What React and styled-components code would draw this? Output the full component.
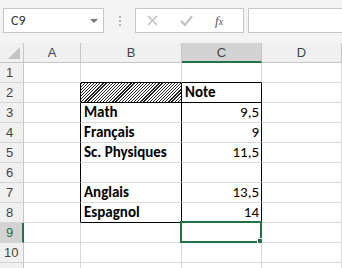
import React from "react";
import styled, { createGlobalStyle } from "styled-components";

const GlobalStyle = createGlobalStyle`
  html, body {
    margin: 0;
    padding: 0;
    background: #f3f3f3;
    overflow: hidden;
  }
`;

const Window = styled.div`
  width: 342px;
  height: 268px;
  display: flex;
  flex-direction: column;
  background: #f3f3f3;
  font-family: Carlito, Calibri, Lato, "Liberation Sans", sans-serif;
  overflow: hidden;
`;

const FormulaBar = styled.div`
  height: 43px;
  flex: none;
  display: flex;
  align-items: flex-start;
  box-sizing: border-box;
  padding: 8px 0 0 3px;
`;

const NameBox = styled.div`
  width: 101px;
  height: 25px;
  box-sizing: border-box;
  border: 1px solid #c6c6c6;
  background: #fff;
  display: flex;
  align-items: center;
  justify-content: space-between;
  padding: 0 4px 0 7px;
  font-size: 14px;
  color: #333;
`;

const Caret = styled.span`
  width: 0;
  height: 0;
  border-left: 4px solid transparent;
  border-right: 4px solid transparent;
  border-top: 4px solid #777;
  margin-right: 1px;
`;

const Grip = styled.div`
  width: 31px;
  height: 25px;
  display: flex;
  flex-direction: column;
  align-items: center;
  justify-content: center;
  gap: 2px;

  span {
    width: 2px;
    height: 2px;
    background: #b5b5b5;
  }
`;

const FxButtons = styled.div`
  width: 109px;
  height: 25px;
  box-sizing: border-box;
  border: 1px solid #c6c6c6;
  background: #fff;
  display: flex;
  align-items: center;
  padding-left: 10px;
  gap: 20px;
`;

const FxLabel = styled.span`
  font-family: "Liberation Serif", serif;
  font-style: italic;
  font-size: 13px;
  color: #555;
  margin-left: 1px;

  sub {
    font-size: 10px;
    vertical-align: baseline;
  }
`;

const FormulaInput = styled.div`
  flex: 1;
  height: 25px;
  margin-left: 4px;
  box-sizing: border-box;
  border: 1px solid #c6c6c6;
  border-right: none;
  background: #fff;
`;

const Sheet = styled.div`
  display: grid;
  grid-template-columns: 24px 57px 101px 80px 80px 1fr;
  grid-auto-rows: 20px;
  background: #fff;
`;

const Corner = styled.div`
  box-sizing: border-box;
  background: #f0f0f0;
  border-right: 1px solid #c6c6c6;
  border-bottom: 1px solid #c6c6c6;
  position: relative;

  &::after {
    content: "";
    position: absolute;
    right: 3px;
    bottom: 3px;
    width: 0;
    height: 0;
    border-left: 12px solid transparent;
    border-bottom: 12px solid #c4c4c4;
  }
`;

const ColHead = styled.div`
  box-sizing: border-box;
  background: ${({ $active }) => ($active ? "#d3d3d3" : "#f0f0f0")};
  border-right: 1px solid #c6c6c6;
  border-bottom: ${({ $active }) =>
    $active ? "2px solid #217346" : "1px solid #c6c6c6"};
  display: flex;
  align-items: center;
  justify-content: center;
  font-family: "Liberation Sans", sans-serif;
  font-size: 13px;
  color: #444;
  padding-top: ${({ $active }) => ($active ? "1px" : "0")};
`;

const RowHead = styled.div`
  box-sizing: border-box;
  background: ${({ $active }) => ($active ? "#d3d3d3" : "#f0f0f0")};
  border-right: ${({ $active }) =>
    $active ? "2px solid #217346" : "1px solid #c6c6c6"};
  border-bottom: 1px solid #d4d4d4;
  display: flex;
  align-items: center;
  padding-left: ${({ $wide }) => ($wide ? "4px" : "6px")};
  font-family: "Liberation Sans", sans-serif;
  font-size: 13px;
  color: ${({ $active }) => ($active ? "#217346" : "#444")};
`;

const Cell = styled.div`
  position: relative;
  box-sizing: border-box;
  border-right: 1px solid ${({ $right }) => ($right ? "#000" : "#d9d9d9")};
  border-bottom: 1px solid ${({ $bottom }) => ($bottom ? "#000" : "#d9d9d9")};
  display: flex;
  align-items: flex-end;
  justify-content: ${({ $num }) => ($num ? "flex-end" : "flex-start")};
  padding: 0 2px 1px 3px;
  font-size: 15px;
  line-height: 17px;
  font-weight: ${({ $bold }) => ($bold ? 700 : 400)};
  color: #000;
  white-space: nowrap;
  background: ${({ $hatch }) =>
    $hatch
      ? "repeating-linear-gradient(135deg, #222 0 0.9px, #fff 0.9px 2.2px)"
      : "#fff"};
`;

const Selection = styled.div`
  position: absolute;
  left: -2px;
  top: -2px;
  right: -1px;
  bottom: -1px;
  border: 2px solid #217346;
  pointer-events: none;

  &::after {
    content: "";
    position: absolute;
    right: -4px;
    bottom: -4px;
    width: 5px;
    height: 5px;
    background: #217346;
    border: 1px solid #fff;
  }
`;

const columns = ["A", "B", "C", "D"];

const data = {
  2: { B: { hatch: true }, C: { text: "Note", bold: true } },
  3: { B: { text: "Math", bold: true }, C: { text: "9,5", num: true } },
  4: { B: { text: "Français", bold: true }, C: { text: "9", num: true } },
  5: { B: { text: "Sc. Physiques", bold: true }, C: { text: "11,5", num: true } },
  7: { B: { text: "Anglais", bold: true }, C: { text: "13,5", num: true } },
  8: { B: { text: "Espagnol", bold: true }, C: { text: "14", num: true } },
};

const inTable = (r) => r >= 2 && r <= 8;

const cellBorders = (col, row) => {
  const right =
    (col === "A" && inTable(row)) || ((col === "B" || col === "C") && inTable(row));
  const bottom =
    (col === "B" || col === "C") && (row === 1 || row === 2 || row === 8);
  return { right, bottom };
};

// row 11 is only a sliver at the bottom edge, its label is not visible
const rows = Array.from({ length: 11 }, (_, i) => i + 1);

export default function App() {
  return (
    <>
      <GlobalStyle />
      <Window>
        <FormulaBar>
          <NameBox>
            C9
            <Caret />
          </NameBox>
          <Grip>
            <span />
            <span />
            <span />
          </Grip>
          <FxButtons>
            <svg width="13" height="13" viewBox="0 0 13 13">
              <path d="M2 2 L11 11 M11 2 L2 11" stroke="#bcbcbc" strokeWidth="1.4" fill="none" />
            </svg>
            <svg width="15" height="13" viewBox="0 0 15 13">
              <path d="M2 7 L6 11 L13 2" stroke="#bcbcbc" strokeWidth="2" fill="none" />
            </svg>
            <FxLabel>
              f<sub>x</sub>
            </FxLabel>
          </FxButtons>
          <FormulaInput />
        </FormulaBar>
        <Sheet>
          <Corner />
          {columns.map((c) => (
            <ColHead key={c} $active={c === "C"}>
              {c}
            </ColHead>
          ))}
          <ColHead />
          {rows.map((r) => (
            <React.Fragment key={r}>
              <RowHead $active={r === 9} $wide={r >= 10}>
                {r <= 10 ? r : ""}
              </RowHead>
              {columns.map((c) => {
                const d = (data[r] && data[r][c]) || {};
                const { right, bottom } = cellBorders(c, r);
                return (
                  <Cell
                    key={c}
                    $right={right}
                    $bottom={bottom}
                    $bold={d.bold}
                    $num={d.num}
                    $hatch={d.hatch}
                  >
                    {d.text}
                    {r === 9 && c === "C" && <Selection />}
                  </Cell>
                );
              })}
              <Cell />
            </React.Fragment>
          ))}
        </Sheet>
      </Window>
    </>
  );
}
